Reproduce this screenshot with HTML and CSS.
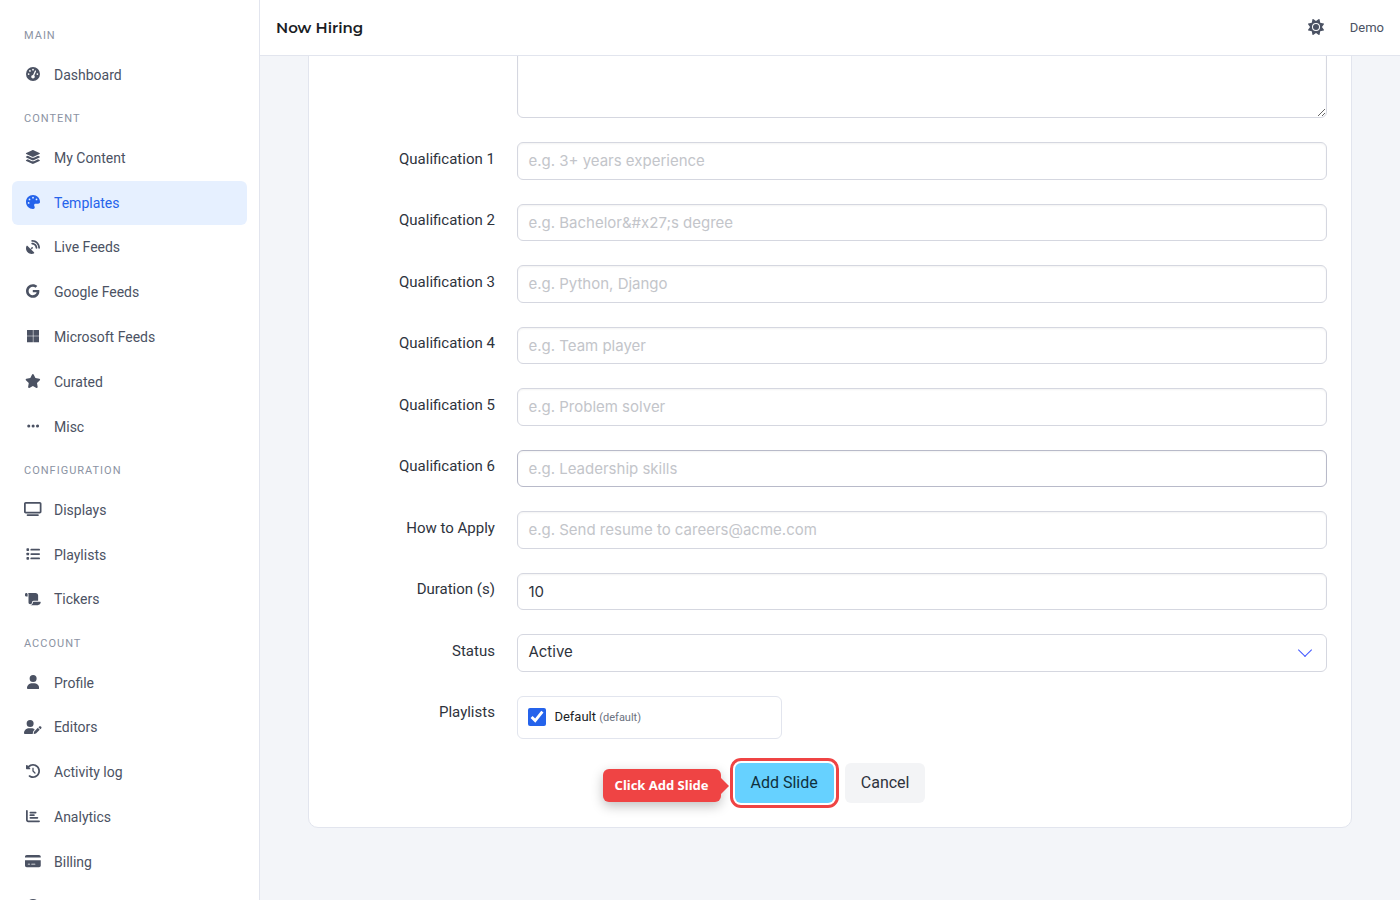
FILE: index.html
```html
<!DOCTYPE html>
<html lang="en">
<head>
  <meta charset="UTF-8">
  <meta name="viewport" content="width=device-width, initial-scale=1.0">
  <title>Now Hiring</title>
  <link rel="stylesheet" href="styles.css">
</head>
<body>
  <!-- Sidebar -->
  <nav class="sidebar">
    <p class="menu-label">Main</p>
    <ul class="menu-list">
      <li><a href="#"><span class="icon"><svg viewBox="0 0 512 512"><path d="M0 256a256 256 0 1 1 512 0A256 256 0 1 1 0 256zM288 96a32 32 0 1 0 -64 0 32 32 0 1 0 64 0zM256 416c35.3 0 64-28.7 64-64c0-17.400-6.900-33.100-18.100-44.600L366 161.700c5.300-12.100-.2-26.300-12.300-31.600s-26.300 .2-31.600 12.300L257.900 288c-.6 0-1.300 0-1.900 0c-35.300 0-64 28.700-64 64s28.700 64 64 64zM176 144a32 32 0 1 0 -64 0 32 32 0 1 0 64 0zM96 288a32 32 0 1 0 0-64 32 32 0 1 0 0 64zm352-32a32 32 0 1 0 -64 0 32 32 0 1 0 64 0z"/></svg></span>Dashboard</a></li>
    </ul>

    <p class="menu-label">Content</p>
    <ul class="menu-list">
      <li><a href="#"><span class="icon"><svg viewBox="0 0 576 512"><path d="M264.500 5.200c14.900-6.900 32.100-6.900 47 0l218.600 101c8.500 3.900 13.900 12.400 13.900 21.800s-5.400 17.900-13.900 21.800l-218.600 101c-14.900 6.900-32.100 6.900-47 0L45.900 149.800C37.400 145.800 32 137.300 32 128s5.400-17.900 13.900-21.800L264.500 5.200zM476.900 209.600l53.200 24.600c8.500 3.900 13.900 12.400 13.900 21.800s-5.400 17.900-13.900 21.800l-218.600 101c-14.900 6.900-32.100 6.900-47 0L45.900 277.800C37.400 273.800 32 265.300 32 256s5.400-17.900 13.900-21.800l53.200-24.600 152 70.200c23.400 10.800 50.400 10.800 73.800 0l152-70.200zm-152 198.200l152-70.200 53.200 24.600c8.500 3.900 13.900 12.400 13.900 21.800s-5.400 17.900-13.900 21.800l-218.600 101c-14.900 6.900-32.100 6.900-47 0L45.900 405.800C37.400 401.800 32 393.300 32 384s5.400-17.900 13.900-21.800l53.200-24.600 152 70.200c23.400 10.800 50.400 10.800 73.800 0z"/></svg></span>My Content</a></li>
      <li><a href="#" class="is-active"><span class="icon"><svg viewBox="0 0 512 512"><path d="M512 256c0 .9 0 1.800 0 2.700c-.4 36.500-33.600 61.300-70.100 61.300H344c-26.500 0-48 21.500-48 48c0 3.400 .4 6.700 1 9.900c2.100 10.200 6.500 20 10.800 29.900c6.100 13.800 12.100 27.500 12.100 42c0 31.800-21.600 60.700-53.400 62c-3.500 .1-7 .2-10.600 .2C114.600 512 0 397.400 0 256S114.600 0 256 0S512 114.600 512 256zM128 288a32 32 0 1 0 -64 0 32 32 0 1 0 64 0zm0-96a32 32 0 1 0 0-64 32 32 0 1 0 0 64zM288 96a32 32 0 1 0 -64 0 32 32 0 1 0 64 0zm96 96a32 32 0 1 0 0-64 32 32 0 1 0 0 64z"/></svg></span>Templates</a></li>
      <li><a href="#"><span class="icon"><svg viewBox="0 0 512 512"><path d="M192 32c0-17.700 14.300-32 32-32C383.100 0 512 128.900 512 288c0 17.700-14.300 32-32 32s-32-14.300-32-32C448 164.300 347.700 64 224 64c-17.700 0-32-14.300-32-32zM60.600 220.600L164.700 324.700l28.400-28.400c-.7-2.600-1.100-5.400-1.100-8.300c0-17.700 14.300-32 32-32s32 14.300 32 32s-14.300 32-32 32c-2.900 0-5.600-.4-8.300-1.100l-28.400 28.400L291.400 451.400c14.500 14.500 11.800 38.800-7.300 46.300C260.500 506.900 234.900 512 208 512C93.100 512 0 418.900 0 304c0-26.900 5.100-52.500 14.400-76.100c7.500-19 31.800-21.800 46.300-7.300zM224 96c106 0 192 86 192 192c0 17.700-14.300 32-32 32s-32-14.300-32-32c0-70.700-57.300-128-128-128c-17.700 0-32-14.300-32-32s14.300-32 32-32z"/></svg></span>Live Feeds</a></li>
      <li><a href="#"><span class="icon"><svg viewBox="0 0 488 512"><path d="M488 261.800C488 403.300 391.100 504 248 504 110.800 504 0 393.200 0 256S110.800 8 248 8c66.800 0 123 24.500 166.300 64.900l-67.500 64.900C258.500 52.600 94.300 116.600 94.300 256c0 86.500 69.100 156.600 153.700 156.600 98.200 0 135-70.400 140.800-106.900H248v-85.300h236.100c2.300 12.700 3.900 24.900 3.900 41.400z"/></svg></span>Google Feeds</a></li>
      <li><a href="#"><span class="icon"><svg viewBox="0 0 448 512"><path d="M0 32h214.600v214.600H0V32zm233.400 0H448v214.600H233.400V32zM0 265.400h214.600V480H0V265.400zm233.400 0H448V480H233.400V265.400z"/></svg></span>Microsoft Feeds</a></li>
      <li><a href="#"><span class="icon"><svg viewBox="0 0 576 512"><path d="M316.900 18C311.600 7 300.400 0 288.100 0s-23.400 7-28.800 18L195 150.300 51.400 171.500c-12 1.800-22 10.200-25.700 21.700s-.7 24.200 7.900 32.700L137.800 329 113.200 474.700c-2 12 3 24.200 12.900 31.300s23 8 33.800 2.300l128.300-68.500 128.300 68.500c10.800 5.700 23.900 4.900 33.800-2.300s14.900-19.300 12.900-31.300L438.500 329 542.700 225.900c8.600-8.500 11.700-21.200 7.900-32.700s-13.700-19.900-25.700-21.700L381.200 150.300 316.900 18z"/></svg></span>Curated</a></li>
      <li><a href="#"><span class="icon"><svg viewBox="0 0 448 512"><path d="M8 256a56 56 0 1 1 112 0A56 56 0 1 1 8 256zm160 0a56 56 0 1 1 112 0 56 56 0 1 1 -112 0zm216-56a56 56 0 1 1 0 112 56 56 0 1 1 0-112z"/></svg></span>Misc</a></li>
    </ul>

    <p class="menu-label">Configuration</p>
    <ul class="menu-list">
      <li><a href="#"><span class="icon"><svg viewBox="0 0 640 512"><path d="M64 64V352H576V64H64zM0 64C0 28.700 28.700 0 64 0H576c35.300 0 64 28.700 64 64V352c0 35.300-28.700 64-64 64H64c-35.300 0-64-28.700-64-64V64zM128 448H512c17.700 0 32 14.300 32 32s-14.300 32-32 32H128c-17.700 0-32-14.300-32-32s14.300-32 32-32z"/></svg></span>Displays</a></li>
      <li><a href="#"><span class="icon"><svg viewBox="0 0 512 512"><rect x="16" y="48" width="96" height="96" rx="24"/><rect x="16" y="208" width="96" height="96" rx="24"/><rect x="16" y="368" width="96" height="96" rx="24"/><rect x="160" y="64" width="352" height="64" rx="32"/><rect x="160" y="224" width="352" height="64" rx="32"/><rect x="160" y="384" width="352" height="64" rx="32"/></svg></span>Playlists</a></li>
      <li><a href="#"><span class="icon"><svg viewBox="0 0 576 512"><path d="M0 80v48c0 17.700 14.300 32 32 32H48 96V80c0-26.500-21.500-48-48-48S0 53.500 0 80zM112 32c10 13.400 16 30 16 48V384c0 35.300 28.700 64 64 64s64-28.700 64-64v-5.300c0-32.400 26.300-58.700 58.700-58.700H480V128c0-53-43-96-96-96H112zM464 480c61.900 0 112-50.100 112-112c0-8.800-7.200-16-16-16H314.700c-14.700 0-26.700 11.900-26.700 26.700V384c0 53-43 96-96 96H368h96z"/></svg></span>Tickers</a></li>
    </ul>

    <p class="menu-label">Account</p>
    <ul class="menu-list">
      <li><a href="#"><span class="icon"><svg viewBox="0 0 448 512"><path d="M224 256A128 128 0 1 0 224 0a128 128 0 1 0 0 256zm-45.700 48C79.800 304 0 383.800 0 482.300C0 498.700 13.300 512 29.700 512H418.300c16.400 0 29.700-13.300 29.700-29.700C448 383.800 368.200 304 269.700 304H178.300z"/></svg></span>Profile</a></li>
      <li><a href="#"><span class="icon"><svg viewBox="0 0 640 512"><path d="M224 256A128 128 0 1 0 224 0a128 128 0 1 0 0 256zm-45.700 48C79.800 304 0 383.800 0 482.300C0 498.700 13.300 512 29.700 512H322.800c-3.100-8.800-3.700-18.400-1.400-27.800l15-60.100c2.800-11.300 8.600-21.500 16.800-29.700l40.300-40.300c-32.100-31-75.700-50.100-123.900-50.100H178.300zm435.500-68.300c-15.600-15.600-40.900-15.600-56.600 0l-29.400 29.400 71 71 29.400-29.400c15.600-15.600 15.600-40.900 0-56.600l-14.400-14.400zM375.900 417c-4.100 4.100-7 9.200-8.400 14.900l-15 60.100c-1.400 5.500 .2 11.200 4.200 15.200s9.700 5.600 15.200 4.200l60.100-15c5.600-1.400 10.800-4.300 14.900-8.400L576.100 358.700l-71-71L375.900 417z"/></svg></span>Editors</a></li>
      <li><a href="#"><span class="icon"><svg viewBox="0 0 512 512"><path d="M75 75L41 41C25.900 25.900 0 36.600 0 57.900V168c0 13.300 10.700 24 24 24H134.100c21.400 0 32.100-25.900 17-41l-30.800-30.800C155 85.500 203 64 256 64c106 0 192 86 192 192s-86 192-192 192c-40.800 0-78.600-12.700-109.700-34.400c-14.500-10.100-34.400-6.600-44.600 7.900s-6.600 34.400 7.900 44.600C151.200 495 201.700 512 256 512c141.400 0 256-114.600 256-256S397.400 0 256 0C185.300 0 121.300 28.700 75 75zm181 53c-13.300 0-24 10.700-24 24V256c0 6.400 2.500 12.500 7 17l72 72c9.400 9.400 24.600 9.400 33.900 0s9.400-24.600 0-33.900l-65-65V152c0-13.300-10.700-24-24-24z"/></svg></span>Activity log</a></li>
      <li><a href="#"><span class="icon"><svg viewBox="0 0 512 512"><path d="M32 32c17.700 0 32 14.300 32 32V400c0 8.800 7.200 16 16 16H480c17.700 0 32 14.300 32 32s-14.300 32-32 32H80c-44.200 0-80-35.800-80-80V64C0 46.300 14.300 32 32 32z"/><rect x="128" y="96" width="256" height="64" rx="32"/><rect x="128" y="192" width="192" height="64" rx="32"/><rect x="128" y="288" width="320" height="64" rx="32"/></svg></span>Analytics</a></li>
      <li><a href="#"><span class="icon"><svg viewBox="0 0 576 512"><path d="M64 32C28.700 32 0 60.700 0 96v32H576V96c0-35.300-28.700-64-64-64H64zM576 224H0V416c0 35.300 28.700 64 64 64H512c35.300 0 64-28.700 64-64V224zM112 352h64c8.800 0 16 7.200 16 16s-7.200 16-16 16H112c-8.800 0-16-7.200-16-16s7.200-16 16-16zm112 16c0-8.800 7.200-16 16-16H368c8.800 0 16 7.200 16 16s-7.200 16-16 16H240c-8.800 0-16-7.200-16-16z"/></svg></span>Billing</a></li>
      <li><a href="#"><span class="icon"><svg viewBox="0 0 512 512"><circle cx="256" cy="256" r="256"/></svg></span>Help</a></li>
    </ul>
  </nav>

  <div class="page">
    <!-- Top bar -->
    <header class="topbar">
      <h1>Now Hiring</h1>
      <div class="topbar-right">
        <button type="button" class="theme-toggle" aria-label="Toggle theme"><svg viewBox="0 0 512 512"><path d="M361.500 1.200c5 2.100 8.600 6.600 9.600 11.900L391 121l107.900 19.800c5.300 1 9.800 4.600 11.900 9.600s1.500 10.700-1.600 15.200L446.900 256l62.300 90.300c3.100 4.500 3.700 10.200 1.600 15.200s-6.600 8.600-11.900 9.600L391 391 371.100 498.900c-1 5.300-4.600 9.800-9.600 11.900s-10.700 1.500-15.200-1.600L256 446.900l-90.300 62.300c-4.500 3.100-10.200 3.700-15.200 1.600s-8.600-6.600-9.600-11.900L121 391 13.100 371.100c-5.300-1-9.800-4.600-11.900-9.600s-1.500-10.700 1.600-15.200L65.100 256 2.800 165.700c-3.100-4.500-3.700-10.200-1.600-15.200s6.600-8.600 11.900-9.600L121 121 140.900 13.100c1-5.300 4.600-9.800 9.600-11.900s10.700-1.500 15.200 1.600L256 65.100 346.300 2.800c4.500-3.100 10.200-3.700 15.200-1.600zM384 256a128 128 0 1 0 -256 0 128 128 0 1 0 256 0z"/><circle cx="256" cy="256" r="96"/></svg></button>
        <a href="#" class="username">Demo</a>
      </div>
    </header>

    <main class="content">
      <form class="card">
        <div class="field">
          <div class="field-label"></div>
          <div class="field-body"><textarea class="textarea" aria-label="Description"></textarea></div>
        </div>
        <div class="field">
          <label class="field-label" for="q1">Qualification 1</label>
          <div class="field-body"><input class="input" type="text" id="q1" placeholder="e.g. 3+ years experience"></div>
        </div>
        <div class="field">
          <label class="field-label" for="q2">Qualification 2</label>
          <div class="field-body"><input class="input" type="text" id="q2" placeholder="e.g. Bachelor&amp;#x27;s degree"></div>
        </div>
        <div class="field">
          <label class="field-label" for="q3">Qualification 3</label>
          <div class="field-body"><input class="input" type="text" id="q3" placeholder="e.g. Python, Django"></div>
        </div>
        <div class="field">
          <label class="field-label" for="q4">Qualification 4</label>
          <div class="field-body"><input class="input" type="text" id="q4" placeholder="e.g. Team player"></div>
        </div>
        <div class="field">
          <label class="field-label" for="q5">Qualification 5</label>
          <div class="field-body"><input class="input" type="text" id="q5" placeholder="e.g. Problem solver"></div>
        </div>
        <div class="field">
          <label class="field-label" for="q6">Qualification 6</label>
          <div class="field-body"><input class="input is-hovered" type="text" id="q6" placeholder="e.g. Leadership skills"></div>
        </div>
        <div class="field">
          <label class="field-label" for="apply">How to Apply</label>
          <div class="field-body"><input class="input" type="text" id="apply" placeholder="e.g. Send resume to careers@acme.com"></div>
        </div>
        <div class="field">
          <label class="field-label" for="duration">Duration (s)</label>
          <div class="field-body"><input class="input" type="number" id="duration" value="10"></div>
        </div>
        <div class="field">
          <label class="field-label" for="status">Status</label>
          <div class="field-body select">
            <select class="input" id="status">
              <option selected>Active</option>
            </select>
          </div>
        </div>
        <div class="field">
          <div class="field-label">Playlists</div>
          <div class="field-body playlists">
            <label class="playlist" for="playlist-default">
              <input type="checkbox" id="playlist-default" checked>
              <span>Default <small>(default)</small></span>
            </label>
          </div>
        </div>

        <div class="buttons">
          <div class="highlight">
            <button type="submit" class="button is-primary">Add Slide</button>
            <div class="callout">Click Add Slide</div>
          </div>
          <button type="button" class="button">Cancel</button>
        </div>
      </form>
    </main>
  </div>
</body>
</html>
```
FILE: styles.css
```css
* {
  box-sizing: border-box;
}

body {
  margin: 0;
  height: 100vh;
  display: flex;
  overflow: hidden;
  font-family: Roboto, sans-serif;
  font-size: 15px;
  line-height: 1.5;
  color: #2e333d;
  background-color: #f3f5f9;
}

/* Sidebar */
.sidebar {
  flex: none;
  width: 260px;
  padding: 14px 12px;
  overflow: hidden;
  background-color: #fff;
  border-right: 1px solid #e2e5ee;
}

.menu-label {
  margin: 0;
  padding: 14px 12px 8px;
  font-size: 11px;
  line-height: 1.5;
  letter-spacing: 1px;
  text-transform: uppercase;
  color: #8b93a3;
}

.menu-list {
  list-style: none;
  margin: 0;
  padding: 0;
}

.menu-list a {
  display: flex;
  align-items: center;
  gap: 12px;
  padding: 0.7rem 12px;
  border-radius: 6px;
  font-size: 14px;
  line-height: 1.6;
  color: #4b5263;
  text-decoration: none;
}

.menu-list a.is-active {
  background-color: #e6f0ff;
  color: #2563eb;
}

.icon {
  display: flex;
  justify-content: center;
  width: 18px;
  padding-bottom: 2px;
}

.icon svg {
  flex: none;
  height: 14px;
  fill: currentColor;
  fill-rule: evenodd;
}

/* Top bar */
.page {
  flex: 1;
  min-width: 0;
  display: flex;
  flex-direction: column;
}

.topbar {
  flex: none;
  display: flex;
  align-items: center;
  justify-content: space-between;
  height: 56px;
  padding: 0 16px;
  background-color: #fff;
  border-bottom: 1px solid #e2e5ee;
}

.topbar h1 {
  margin: 0;
  font-family: Montserrat, Inter, sans-serif;
  font-size: 15px;
  font-weight: 600;
  line-height: 24px;
  color: #1a1d24;
}

.topbar-right {
  display: flex;
  align-items: center;
  gap: 26px;
}

.theme-toggle {
  display: flex;
  padding: 0 0 2px;
  border: none;
  background: none;
  color: #4b5263;
  cursor: pointer;
}

.theme-toggle svg {
  height: 16px;
  fill: currentColor;
  fill-rule: evenodd;
}

.username {
  font-size: 13px;
  color: #4b5263;
  text-decoration: none;
}

/* Form */
.content {
  flex: 1;
  padding: 0 48px;
  overflow: hidden;
}

.card {
  margin-top: -83px; /* the form is scrolled under the top bar */
  padding: 24px;
  background-color: #fff;
  border: 1px solid #e2e5ee;
  border-radius: 10px;
}

.field {
  display: flex;
  margin-bottom: 24px;
}

.field-label {
  flex: 1 1 0;
  margin-right: 1.5em;
  padding-top: 0.375em;
  text-align: right;
}

.field-body {
  flex: 5 1 0;
  min-width: 0;
}

.input,
.textarea {
  display: block;
  width: 100%;
  height: 2.5em;
  padding: 0 10px;
  font-family: Inter, sans-serif;
  font-size: 15px;
  color: #2e333d;
  background-color: #fff;
  border: 1px solid #d5d7e0;
  border-radius: 6px;
  box-shadow: inset 0 1px 2px rgba(10, 10, 10, 0.05);
}

.input.is-hovered {
  border-color: #b8bac9;
}

.input::placeholder {
  color: #c3c5ca;
}

.input[type="number"] {
  appearance: textfield;
}

.textarea {
  height: 120px;
  resize: vertical;
}

.select {
  position: relative;
}

.select .input {
  appearance: none;
  padding-bottom: 2px;
  box-shadow: none;
}

.select::after {
  content: "";
  position: absolute;
  right: 17px;
  top: 11px;
  width: 9px;
  height: 9px;
  border: 1px solid #4258ff;
  border-top: 0;
  border-right: 0;
  transform: rotate(-45deg);
  pointer-events: none;
}

.playlists {
  display: grid;
  grid-template-columns: repeat(3, 1fr);
  gap: 8px;
}

.playlist {
  display: flex;
  align-items: center;
  gap: 8px;
  height: 43px;
  padding: 0 10px;
  border: 1px solid #e2e5ee;
  border-radius: 6px;
  font-size: 13px;
  color: #1a1d24;
}

.playlist input {
  width: 18px;
  height: 18px;
  margin: 0;
  accent-color: #2563eb;
}

.playlist small {
  font-size: 11px;
  color: #6b7280;
}

/* Buttons */
.buttons {
  display: flex;
  justify-content: center;
  gap: 11px;
}

.button {
  height: 40px;
  padding: 0 16px;
  border: none;
  border-radius: 6px;
  font-family: Roboto, sans-serif;
  font-size: 16px;
  color: #2e333d;
  background-color: #f3f4f6;
  cursor: pointer;
}

.button.is-primary {
  color: #0f303d;
  background-color: #66d1ff;
  outline: 3px solid #ef4444;
  outline-offset: 2px;
}

.highlight {
  position: relative;
}

.callout {
  position: absolute;
  right: 100%;
  top: 6px;
  margin-right: 14px;
  padding: 6px 12px;
  border-radius: 6px;
  font-family: "Noto Sans", sans-serif;
  font-size: 13px;
  font-weight: 700;
  line-height: 21px;
  white-space: nowrap;
  color: #fff;
  background-color: #ef4444;
  box-shadow: 0 4px 12px rgba(0, 0, 0, 0.25);
}

.callout::after {
  content: "";
  position: absolute;
  left: 100%;
  top: 9px;
  border: 8px solid transparent;
  border-left-color: #ef4444;
  border-right: 0;
}
```
